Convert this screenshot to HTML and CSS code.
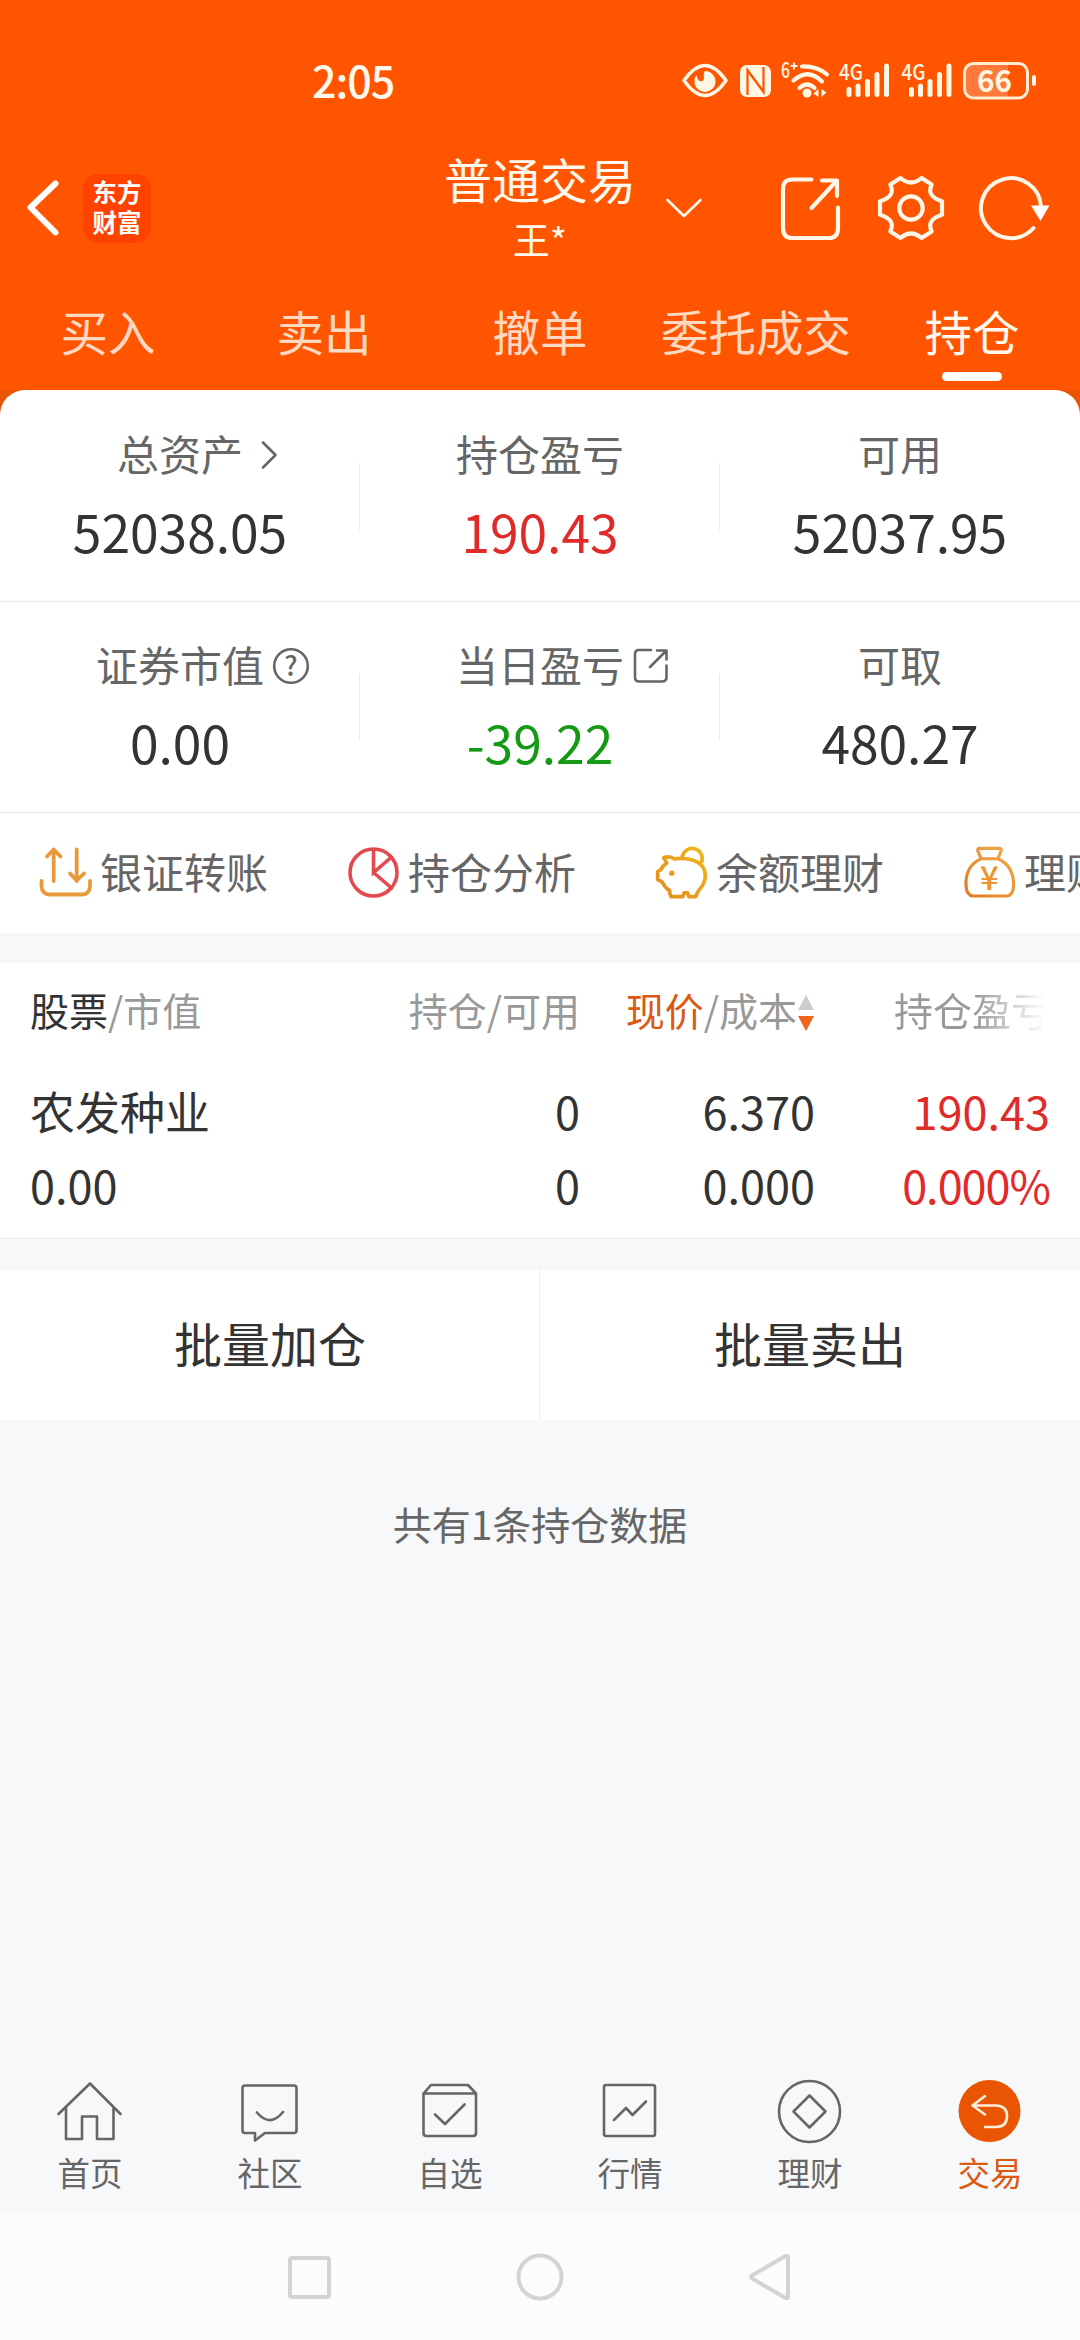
FILE: index.html
```html
<!DOCTYPE html>
<html lang="zh-CN">
<head>
<meta charset="utf-8">
<title>持仓</title>
<link rel="stylesheet" href="styles.css">
</head>
<body>
<div class="screen">
  <header class="header">
    <div class="status">
      <span class="clock">2:05</span>
      <svg class="status-icons" viewBox="676 56 364 50" width="364" height="50">
        <path d="M684 80.500Q705 50.500 726 80.500Q705 110.500 684 80.500Z" fill="none" stroke="#fff6e4" stroke-width="3.500" stroke-linejoin="round"/>
        <path d="M705 71a10.500 10.500 0 1 1-10.500 10c0-3 1-5 2.500-6c0 4 2 7 5 6c4-1 0-6 3-10Z" fill="#fff6e4"/>
        <rect x="740" y="65" width="31" height="32" rx="7" fill="#fff6e4"/>
        <path d="M747.500 95V70L763 91M763.500 67V92L748 71" fill="none" stroke="#ff5500" stroke-width="2.200"/>
        <text x="781" y="78" class="tiny" textLength="9" lengthAdjust="spacingAndGlyphs">6</text>
        <path d="M790.500 66h7M794 62.500v7" stroke="#fff6e4" stroke-width="2"/>
        <path d="M802 66.500Q817 66 827 74.500M793.500 80.500Q808 67.500 822 81.500M799.500 88Q807 81 814.500 88" fill="none" stroke="#fff6e4" stroke-width="4.200" stroke-linecap="round"/>
        <circle cx="807" cy="93" r="4.500" fill="#fff6e4"/>
        <path d="M818.500 89v8l-5-3.500ZM821.500 89v8l5-4.500Z" fill="#fff6e4"/>
        <g id="signal">
          <text x="839" y="80" class="tiny" textLength="24" lengthAdjust="spacingAndGlyphs">4G</text>
          <path d="M849 89.500v5M858 86v8.500M867.500 81.500v13M877 74.500v20M886.500 66v28.500" stroke="#fff6e4" stroke-width="5" stroke-linecap="round"/>
        </g>
        <use href="#signal" x="62.500"/>
        <path d="M971 64h37v34h-37q-7 0-7-8V72q0-8 7-8Z" fill="#ff7a3a"/>
        <rect x="964.500" y="63.500" width="63" height="34.500" rx="9" fill="none" stroke="#ffecd2" stroke-width="3"/>
        <rect x="1032" y="75" width="4" height="11" rx="2" fill="#fff6e4"/>
        <text x="977" y="92" class="battery" textLength="35" lengthAdjust="spacingAndGlyphs">66</text>
      </svg>
    </div>

    <div class="appbar">
      <div class="appbar-left">
        <svg viewBox="24 176 36 66" width="36" height="66"><path d="M55.500 184.500L30.500 208.500L55.500 233.500" fill="none" stroke="#fff" stroke-width="6" stroke-linecap="round" stroke-linejoin="round"/></svg>
        <div class="logo"><span>东方</span><span>财富</span></div>
      </div>
      <div class="account">
        <div class="account-type">普通交易</div>
        <div class="account-name">王*</div>
      </div>
      <div class="appbar-right">
        <svg class="down" viewBox="664 196 40 22" width="40" height="22"><path d="M667.500 199L684 215L700.500 199" fill="none" stroke="#fff6e8" stroke-width="2.700" stroke-linecap="round" stroke-linejoin="round"/></svg>
        <svg class="share" viewBox="779 174 62 68" width="62" height="68" fill="none" stroke="#fff6e8" stroke-width="4.200" stroke-linecap="round" stroke-linejoin="round"><path d="M811.500 179.500H792Q783 179.500 783 189V228Q783 238 792 238H829Q838 238 838 228V207.500M822 180.500H837V196M811.500 208L836 181.500"/></svg>
        <svg class="gear" viewBox="-34 -34 68 68" width="68" height="68" fill="none" stroke="#fff6e8" stroke-width="4.200" stroke-linejoin="round"><path d="M-20.700-23.500L-10.500-30Q0-21 10.500-30L20.700-23.500Q15-11.500 31-6.700V6.700Q15 11.500 20.700 23.500L10.500 30Q0 21-10.500 30L-20.700 23.500Q-15 11.500-31 6.700V-6.700Q-15-11.500-20.700-23.500Z"/><circle r="11.700"/></svg>
        <svg class="refresh" viewBox="977 173 75 70" width="75" height="70"><path d="M1033.500 228A30 30 0 1 1 1041 207" fill="none" stroke="#fff6e8" stroke-width="4" stroke-linecap="round"/><path d="M1031 205.500H1049.500L1040.500 221Z" fill="#fff"/></svg>
      </div>
    </div>

    <nav class="tabs">
      <span>买入</span><span>卖出</span><span>撤单</span><span>委托成交</span><span class="active">持仓</span>
    </nav>
  </header>

  <div class="corner-back">
  <section class="panel">
    <div class="stats">
      <div class="stat">
        <div class="label"><span>总资产</span><svg class="arrow-icon" width="18" height="30" viewBox="0 0 18 30"><path d="M3 2.500L15.500 15L3 27.500" fill="none" stroke="#666" stroke-width="2.600" stroke-linecap="round" stroke-linejoin="round"/></svg></div>
        <div class="value">52038.05</div>
      </div>
      <div class="stat">
        <div class="label"><span>持仓盈亏</span></div>
        <div class="value up">190.43</div>
      </div>
      <div class="stat">
        <div class="label"><span>可用</span></div>
        <div class="value">52037.95</div>
      </div>
    </div>
    <div class="stats">
      <div class="stat">
        <div class="label"><span>证券市值</span><svg class="help-icon" width="38" height="38" viewBox="0 0 38 38"><circle cx="19" cy="19" r="16.800" fill="none" stroke="#666" stroke-width="2.600"/><text x="19" y="28.500" class="question">?</text></svg></div>
        <div class="value">0.00</div>
      </div>
      <div class="stat">
        <div class="label"><span>当日盈亏</span><svg class="open-icon" width="36" height="36" viewBox="0 0 36 36"><path d="M18 2H6Q2 2 2 6V29Q2 33.500 6 33.500H29Q33.500 33.500 33.500 29V17.500M24 2.500H33.500V11.500M17 19L33 3" fill="none" stroke="#666" stroke-width="2.600" stroke-linecap="round" stroke-linejoin="round"/></svg></div>
        <div class="value down-green">-39.22</div>
      </div>
      <div class="stat">
        <div class="label"><span>可取</span></div>
        <div class="value">480.27</div>
      </div>
    </div>

    <div class="quick">
      <div class="quick-item">
        <svg viewBox="39 846 53 53" width="53" height="53" fill="none" stroke="#e8993a" stroke-width="3.800" stroke-linecap="round" stroke-linejoin="round"><path d="M53.700 881V849.500M47 856.500L53.700 849.500L60.500 856.500M76.700 849.500V881M70 873.500L76.700 880.500L84 873.500M41.500 881V886Q42 894.500 50 894.500H82Q89.500 894.500 90 886V881"/></svg>
        <span>银证转账</span>
      </div>
      <div class="quick-item">
        <svg viewBox="347 846 53 53" width="53" height="53" fill="none" stroke="#e5484d" stroke-width="3.600" stroke-linecap="round"><circle cx="373.500" cy="872.500" r="23.500"/><path d="M373.500 850V872.500L391 857.500M373.500 872.500L391.500 888"/></svg>
        <span>持仓分析</span>
      </div>
      <div class="quick-item">
        <svg viewBox="45 48 158 158" width="53" height="53" fill="none" stroke="url(#gold)" stroke-width="11" stroke-linejoin="round"><defs><linearGradient id="gold" x1="0" y1="1" x2="1" y2="0"><stop offset="0" stop-color="#e58a1c"/><stop offset="1" stop-color="#edb91e"/></linearGradient></defs><path d="M104 87C115 83 195 80 195 138C195 160 183 172 174 182L166 199H146L142 188H132L128 199H93Q88 190 88 180C78 176 72 165 66 155L53 148V124L63 118Q68 106 80 99L71 83Q88 76 104 87ZM126 82A30 30 0 1 1 183 98"/><circle cx="95" cy="129" r="8" fill="#e89b20" stroke="none"/></svg>
        <span>余额理财</span>
      </div>
      <div class="quick-item">
        <svg viewBox="968 48 158 158" width="53" height="53" fill="none" stroke="url(#amber)" stroke-width="9.500" stroke-linejoin="round"><defs><linearGradient id="amber" x1="0" y1="1" x2="1" y2="0"><stop offset="0" stop-color="#df7c20"/><stop offset="1" stop-color="#f0ac4e"/></linearGradient></defs><path d="M1022 86L1012 62Q1010 55 1018 55H1076Q1084 55 1082 62L1072 86C1104 100 1119 130 1119 165Q1118 196 1098 197H998Q978 196 977 165C975 130 990 100 1022 86ZM1022 86H1072"/><text x="1047" y="178" class="yen">¥</text></svg>
        <span>理财</span>
      </div>
    </div>
  </section>
  </div>

  <section class="holdings">
    <div class="row head">
      <span><b>股票</b>/市值</span>
      <span>持仓/可用</span>
      <span class="sort"><b class="hot">现价</b>/成本<svg width="18" height="36" viewBox="0 0 18 36"><path d="M9 0L17 15H1Z" fill="#ccc"/><path d="M9 36L17 21H1Z" fill="#f0651c"/></svg></span>
      <span class="fade">持仓盈亏</span>
    </div>
    <div class="row first"><span>农发种业</span><span>0</span><span>6.370</span><span class="up">190.43</span></div>
    <div class="row"><span>0.00</span><span>0</span><span>0.000</span><span class="up percent">0.000%</span></div>
  </section>

  <section class="batch"><span>批量加仓</span><span>批量卖出</span></section>
  <p class="summary">共有1条持仓数据</p>

  <nav class="tabbar">
    <div class="tab">
      <svg viewBox="55 2078 70 66" width="70" height="66"><path d="M58.500 2114L90 2083.500L120.500 2114M66 2107V2139H82V2116.500H97V2139H113.500V2107"/></svg>
      <span>首页</span>
    </div>
    <div class="tab">
      <svg viewBox="235 2078 70 66" width="70" height="66"><path d="M245 2085.500H294Q296.500 2085.500 296.500 2088V2130.500Q296.500 2133 294 2133H265L255 2140.500V2133H245Q242.500 2133 242.500 2130.500V2088Q242.500 2085.500 245 2085.500ZM257 2112.500Q270 2128 283 2112"/></svg>
      <span>社区</span>
    </div>
    <div class="tab">
      <svg viewBox="415 2078 70 66" width="70" height="66"><path d="M423.500 2093.500L431 2085H468L476 2093.500V2133Q476 2136 473 2136H426.500Q423.500 2136 423.500 2133ZM423.500 2093.500H476M435 2114.500L445 2124L464.500 2104.500"/></svg>
      <span>自选</span>
    </div>
    <div class="tab">
      <svg viewBox="595 2078 70 66" width="70" height="66"><rect x="604" y="2085" width="51" height="51" rx="2"/><path d="M614 2120L626 2108L632.500 2115L646 2101.500"/></svg>
      <span>行情</span>
    </div>
    <div class="tab">
      <svg viewBox="775 2078 70 66" width="70" height="66"><circle cx="809.500" cy="2111.500" r="30.500"/><path d="M809.500 2095.500L825.500 2111.500L809.500 2127.500L793.500 2111.500Z"/></svg>
      <span>理财</span>
    </div>
    <div class="tab current">
      <svg viewBox="955 2078 70 66" width="70" height="66"><circle cx="989.500" cy="2111" r="31" fill="#ea5504" stroke="none"/><path d="M985 2096L972.500 2105.500L985 2114.500M973 2105.500H996Q1007 2106 1007 2116Q1007 2127 996 2127H985" stroke="#fff0dc"/></svg>
      <span>交易</span>
    </div>
  </nav>

  <footer class="sysnav">
    <svg viewBox="0 0 48 48" width="48" height="48"><rect x="5" y="5" width="39" height="39" rx="2"/></svg>
    <svg viewBox="0 0 50 50" width="50" height="50"><circle cx="25" cy="25" r="21.500"/></svg>
    <svg viewBox="0 0 48 50" width="48" height="50"><path d="M41 5.500Q41 3 38.500 4L5 23.500Q3 25 5 26.500L38.500 46Q41 47 41 44.500Z"/></svg>
  </footer>
</div>
</body>
</html>
```

FILE: styles.css
```css
* { box-sizing: border-box; }

body {
  margin: 0;
  font-family: "Noto Sans CJK SC", sans-serif;
  color: #333;
}

svg { display: block; flex: none; overflow: visible; }
b { font-weight: inherit; color: #333; }

.screen {
  width: 1080px;
  height: 2340px;
  display: flex;
  flex-direction: column;
  overflow: hidden;
  background: #f7f8fa;
}

/* header */
.header { height: 390px; flex: none; background: #ff5500; color: #fff8ec; }
.status {
  height: 141px;
  padding: 56px 40px 0 312px;
  display: flex;
  justify-content: space-between;
}
.clock { font-size: 43px; font-weight: 500; line-height: 46px; letter-spacing: -1px; }
.tiny { font-size: 21.500px; font-weight: 500; fill: #fff6e4; }
.battery { font-size: 30px; font-weight: 700; fill: #fff6e4; }

.appbar { height: 137px; display: grid; grid-template-columns: 444px 192px 444px; }
.appbar-left { display: flex; align-items: flex-start; padding: 34px 0 0 24px; gap: 23px; }
.logo {
  width: 68px;
  height: 69px;
  margin-top: -1px;
  padding-top: 3px;
  border-radius: 15px;
  background: #ff4200;
  color: #fff;
  display: flex;
  flex-direction: column;
  align-items: center;
  font-size: 24.500px;
  font-weight: 700;
  line-height: 30px;
}
.account { text-align: center; padding-top: 7px; }
.account-type { font-size: 48px; line-height: 60px; white-space: nowrap; }
.account-name { font-size: 37px; line-height: 50px; margin-top: 6px; }
.appbar-right { display: flex; align-items: center; padding: 0 0 4px 28px; }
.share { margin-left: 75px; }
.gear { margin-left: 36px; }
.refresh { margin-left: 32px; }

.tabs {
  height: 112px;
  display: grid;
  grid-template-columns: repeat(5, 1fr);
  justify-items: center;
  font-size: 47.500px;
  line-height: 64px;
  color: #ffd9c2;
}
.tabs span { display: flex; flex-direction: column; align-items: center; padding-top: 21px; }
.tabs .active { color: #fff8ec; }
.tabs .active::after {
  content: "";
  width: 60px;
  height: 9px;
  margin-top: 9px;
  border-radius: 5px;
  background: #fff;
}

/* account figures */
.corner-back { background: linear-gradient(#ea5504 30px, #fff 30px); flex: none; }
.panel { background: #fff; border-radius: 25px 25px 0 0; height: 543px; }
.stats {
  height: 211px;
  display: grid;
  grid-template-columns: repeat(3, 360px);
  border-top: 1px solid transparent;
}
.stats + .stats { border-color: #eaeaea; }
.stat {
  padding-top: 32px;
  background: linear-gradient(#ebebeb, #ebebeb) no-repeat right 72px / 1px 67px;
}
.stat:last-child { background: none; }
.label {
  display: grid;
  grid-template-columns: 1fr auto 1fr;
  align-items: center;
  font-size: 42px;
  line-height: 60px;
  color: #666;
}
.label span { grid-column: 2; }
.label svg { margin-top: 3px; }
.arrow-icon { margin-left: 17px; }
.help-icon { margin-left: 8px; }
.open-icon { margin-left: 9px; }
.question { font-size: 27px; font-weight: 500; text-anchor: middle; fill: #666; }
.value { margin-top: 12px; font-size: 51.500px; line-height: 71px; text-align: center; }
.up { color: #e02b2b; }
.down-green { color: #159a15; }

.quick {
  height: 121px;
  border-top: 1px solid #eaeaea;
  display: flex;
  padding-left: 39px;
  overflow: hidden;
  color: #666;
  font-size: 42px;
}
.quick-item { flex: 0 0 308px; display: flex; align-items: center; gap: 8px; white-space: nowrap; }
.quick-item svg { margin-top: -2px; }
.quick-item span { line-height: 60px; margin-top: -5px; }
.yen { font-size: 98px; font-weight: 500; text-anchor: middle; fill: #ec9430; stroke: none; }

/* holdings */
.holdings { flex: none; height: 276px; margin-top: 30px; background: #fff; border-bottom: 1px solid #ececec; }
.row {
  display: grid;
  grid-template-columns: 1fr 250px 235px 235px;
  padding: 0 30px;
  font-size: 45px;
  line-height: 74px;
  text-align: right;
}
.row span:first-child { text-align: left; }
.head { font-size: 39px; line-height: 93px; color: #999; }
.first { padding-top: 18px; }
.percent { letter-spacing: -1px; }
.sort { display: flex; align-items: center; justify-content: flex-end; }
.sort svg { margin-top: 6px; }
.hot { color: #d85a14; }
.fade { color: transparent; background: linear-gradient(90deg, #999 68%, #fff 98%); background-clip: text; -webkit-background-clip: text; }

/* batch actions */
.batch {
  flex: none;
  height: 150px;
  margin-top: 31px;
  background: linear-gradient(#ececec, #ececec) no-repeat 539px 0 / 1px 100% #fff;
  display: grid;
  grid-template-columns: 1fr 1fr;
  text-align: center;
  font-size: 48px;
  line-height: 145px;
}
.summary { margin: 73px 0 0; text-align: center; font-size: 39px; line-height: 60px; color: #666; }

/* bottom bars */
.tabbar { margin-top: auto; height: 154px; padding-top: 18px; display: grid; grid-template-columns: repeat(6, 1fr); justify-items: center; color: #666; }
.tab { display: flex; flex-direction: column; align-items: center; font-size: 32.500px; line-height: 44px; gap: 6px; }
.tab svg { fill: none; stroke: #666; stroke-width: 2.600; stroke-linecap: round; stroke-linejoin: round; }
.current { color: #dd5a12; }
.sysnav {
  height: 126px;
  flex: none;
  background: #fcfcfc;
  display: flex;
  align-items: center;
  justify-content: center;
  gap: 182px;
}
.sysnav svg { fill: none; stroke: #d3d3d3; stroke-width: 4; stroke-linejoin: round; }
```
